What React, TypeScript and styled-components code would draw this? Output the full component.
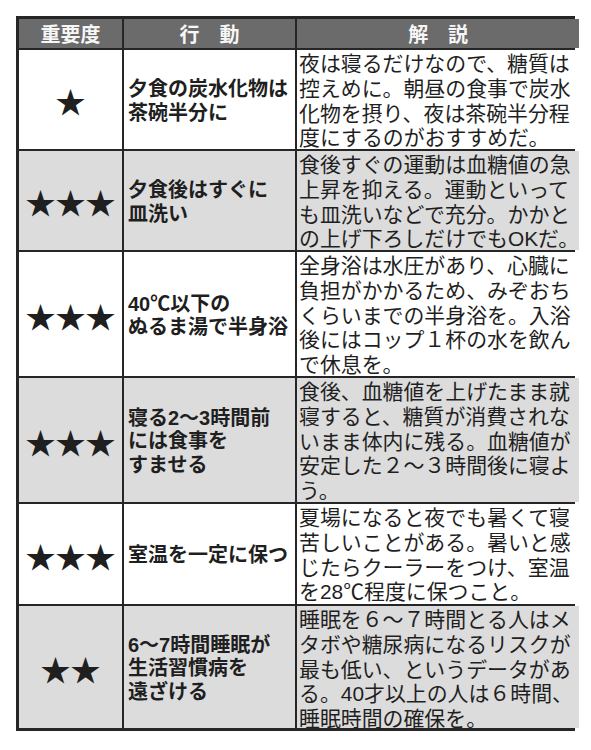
import React from "react";
import styled, { createGlobalStyle } from "styled-components";

const GlobalStyle = createGlobalStyle`
  html, body {
    margin: 0;
    padding: 0;
    background: #ffffff;
  }
  body {
    font-family: "Liberation Sans", "Noto Sans CJK JP", sans-serif;
    color: #1f1f1f;
  }
`;

const Page = styled.div`
  padding: 16px 16px 0 16px;
  width: 591px;
  box-sizing: border-box;
`;

const Table = styled.div`
  display: grid;
  grid-template-columns: 103px 171px 1fr;
  grid-template-rows: 29px 99px 99px 124px 124px 100px 122px;
  gap: 2px;
  width: 559px;
  box-sizing: border-box;
  border: 3px solid #262626;
  background: #262626;
`;

const HeadCell = styled.div`
  background: #6b6b6b;
  color: #f6f6f6;
  font-weight: 700;
  font-size: 20px;
  line-height: 29px;
  padding-top: 2px;
  box-sizing: border-box;
  text-align: center;
  white-space: pre;
`;

const Cell = styled.div<{ $shaded: boolean }>`
  background: ${(p) => (p.$shaded ? "#dcdcdc" : "#ffffff")};
  overflow: visible;
  box-sizing: border-box;
`;

const StarCell = styled(Cell)`
  display: flex;
  align-items: center;
  justify-content: center;
  font-family: "Noto Sans CJK JP", sans-serif;
  font-size: 30px;
  line-height: 1;
  color: #1f1f1f;
  padding-top: 1px;
`;

const ActionCell = styled(Cell)`
  display: flex;
  flex-direction: column;
  justify-content: center;
  padding: 4px 0 0 4px;
  font-weight: 700;
  font-size: 20px;
  line-height: 23.5px;
  white-space: nowrap;
`;

const NoteCell = styled(Cell)`
  padding: 2px 0 0 2px;
  font-size: 20.9px;
  line-height: 24.8px;
  white-space: nowrap;
`;

const Line = styled.div``;

type RowData = {
  stars: number;
  action: string[];
  note: string[];
};

const rows: RowData[] = [
  {
    stars: 1,
    action: ["夕食の炭水化物は", "茶碗半分に"],
    note: [
      "夜は寝るだけなので、糖質は",
      "控えめに。朝昼の食事で炭水",
      "化物を摂り、夜は茶碗半分程",
      "度にするのがおすすめだ。",
    ],
  },
  {
    stars: 3,
    action: ["夕食後はすぐに", "皿洗い"],
    note: [
      "食後すぐの運動は血糖値の急",
      "上昇を抑える。運動といって",
      "も皿洗いなどで充分。かかと",
      "の上げ下ろしだけでもOKだ。",
    ],
  },
  {
    stars: 3,
    action: ["40℃以下の", "ぬるま湯で半身浴"],
    note: [
      "全身浴は水圧があり、心臓に",
      "負担がかかるため、みぞおち",
      "くらいまでの半身浴を。入浴",
      "後にはコップ１杯の水を飲ん",
      "で休息を。",
    ],
  },
  {
    stars: 3,
    action: ["寝る2～3時間前", "には食事を", "すませる"],
    note: [
      "食後、血糖値を上げたまま就",
      "寝すると、糖質が消費されな",
      "いまま体内に残る。血糖値が",
      "安定した２～３時間後に寝よ",
      "う。",
    ],
  },
  {
    stars: 3,
    action: ["室温を一定に保つ"],
    note: [
      "夏場になると夜でも暑くて寝",
      "苦しいことがある。暑いと感",
      "じたらクーラーをつけ、室温",
      "を28℃程度に保つこと。",
    ],
  },
  {
    stars: 2,
    action: ["6～7時間睡眠が", "生活習慣病を", "遠ざける"],
    note: [
      "睡眠を６～７時間とる人はメ",
      "タボや糖尿病になるリスクが",
      "最も低い、というデータがあ",
      "る。40才以上の人は６時間、",
      "睡眠時間の確保を。",
    ],
  },
];

export default function App() {
  return (
    <>
      <GlobalStyle />
      <Page>
        <Table>
          <HeadCell>重要度</HeadCell>
          <HeadCell>行　動</HeadCell>
          <HeadCell>解　説</HeadCell>
          {rows.map((r, i) => {
            const shaded = i % 2 === 1;
            return (
              <React.Fragment key={i}>
                <StarCell $shaded={shaded}>{"★".repeat(r.stars)}</StarCell>
                <ActionCell $shaded={shaded}>
                  {r.action.map((l, j) => (
                    <Line key={j}>{l}</Line>
                  ))}
                </ActionCell>
                <NoteCell $shaded={shaded}>
                  {r.note.map((l, j) => (
                    <Line key={j}>{l}</Line>
                  ))}
                </NoteCell>
              </React.Fragment>
            );
          })}
        </Table>
      </Page>
    </>
  );
}
